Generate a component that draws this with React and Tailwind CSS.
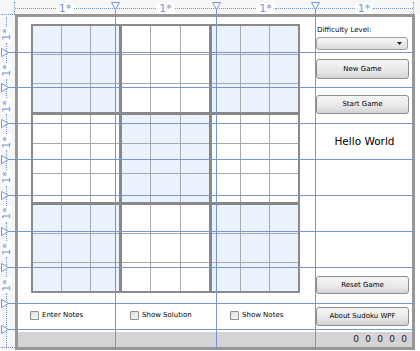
import React from 'react';

const blocks = [0, 1, 2, 3, 4, 5, 6, 7, 8];
const shadedBlocks = [0, 2, 4, 6, 8];

// Sudoku board: 3x3 blocks of 3x3 cells
const Board = () => (
  <div className="grid h-[269px] w-[269px] grid-cols-3 grid-rows-3 gap-[3px] border-2 border-[#8a8a8a] bg-[#888888]">
    {blocks.map((b) => (
      <div key={b} className="grid grid-cols-3 grid-rows-3 gap-px bg-[#a9a9a9]">
        {blocks.map((c) => (
          <div key={c} className={shadedBlocks.includes(b) ? 'bg-[#eaf3fd]' : 'bg-white'} />
        ))}
      </div>
    ))}
  </div>
);

const TopSegment = ({ className }) => (
  <div className={`flex items-center ${className}`}>
    <div className="flex-1 border-t border-dotted border-[#7396d4]" />
    <span className="bg-white px-[3px] text-[11px] leading-[11px] text-[#7396d4]">1*</span>
    <div className="flex-1 border-t border-dotted border-[#7396d4]" />
  </div>
);

const LeftSegment = () => (
  <div className="flex min-h-0 flex-1 flex-col items-center">
    <div className="flex-1 border-l border-dotted border-[#7396d4]" />
    <div className="flex h-[16px] w-[11px] items-center justify-center bg-white">
      <span className="-rotate-90 whitespace-nowrap text-[11px] leading-[11px] text-[#7396d4]">1*</span>
    </div>
    <div className="flex-1 border-l border-dotted border-[#7396d4]" />
  </div>
);

const GameButton = ({ children, className = '' }) => (
  <div
    className={`ml-px flex w-[93px] items-center justify-center rounded-[3px] border border-[#8e8e8e] bg-linear-to-b from-[#f5f5f5] via-[#ebebeb] to-[#d4d4d4] text-[7px] text-black ${className}`}
  >
    {children}
  </div>
);

const CheckBox = ({ label, className = '' }) => (
  <div className={`flex items-center gap-[3px] pt-[8px] ${className}`}>
    <div className="h-[9px] w-[9px] rounded-[1px] border border-[#8e8f8f] bg-linear-to-br from-[#dcdcdc] to-[#fbfbfb]" />
    <span className="text-[7px] leading-[9px] text-black">{label}</span>
  </div>
);

const DownTri = ({ className }) => (
  <svg className={`absolute h-[8px] w-[9px] ${className}`} viewBox="0 0 9 8">
    <polygon points="0.5,0.5 8.5,0.5 4.5,7.5" fill="white" stroke="#7396d4" strokeWidth="1" />
  </svg>
);

const RightTri = ({ className }) => (
  <svg className={`absolute left-px h-[9px] w-[8px] ${className}`} viewBox="0 0 8 9">
    <polygon points="0.5,0.5 7.5,4.5 0.5,8.5" fill="white" stroke="#7396d4" strokeWidth="1" />
  </svg>
);

export default function App() {
  return (
    <div className="relative h-[351px] w-[420px] overflow-hidden bg-white font-['DejaVu_Sans',sans-serif]">
      {/* Top ruler */}
      <div className="flex h-[14px] bg-[#f6f6f6] pt-[2px]">
        <div className="w-[15px] border-r border-dotted border-[#7396d4]" />
        <TopSegment className="w-[100px]" />
        <TopSegment className="w-[101px]" />
        <TopSegment className="w-[99px]" />
        <TopSegment className="w-[99px] border-r border-dotted border-[#7396d4]" />
      </div>

      <div className="flex">
        {/* Left ruler */}
        <div className="flex h-[336px] w-[15px] flex-col bg-[#f6f6f6] pl-px">
          <div className="h-[3px] border-t border-dotted border-[#7396d4]" />
          <div className="flex h-[286px] w-[11px] flex-col">
            <LeftSegment />
            <LeftSegment />
            <LeftSegment />
            <LeftSegment />
            <LeftSegment />
            <LeftSegment />
            <LeftSegment />
            <LeftSegment />
          </div>
          <div className="flex w-[11px] flex-1 flex-col items-center">
            <div className="flex-1 border-l border-dotted border-[#7396d4]" />
          </div>
          <div className="h-[3px] border-t border-dotted border-[#7396d4]" />
        </div>

        {/* Window */}
        <div className="h-[336px] w-[400px] border-[3px] border-[#979797] bg-white">
          <div className="grid h-full grid-cols-[97px_101px_99px_97px] grid-rows-[repeat(8,minmax(0,1fr))_26px_18px]">
            <div className="col-span-3 col-start-1 row-span-8 row-start-1 pl-[13px] pt-[7px]">
              <Board />
            </div>

            <div className="col-start-4 row-start-1 flex flex-col pt-[8px]">
              <span className="ml-[2px] text-[7px] leading-[10px] text-black">Difficulty Level:</span>
              <div className="ml-px mt-[2px] flex h-[13px] w-[92px] items-center justify-end rounded-[3px] border border-[#a0a0a0] bg-linear-to-b from-[#f8f8f8] to-[#dcdcdc] pr-[5px]">
                <svg className="h-[3px] w-[5px]" viewBox="0 0 5 3">
                  <polygon points="0,0 5,0 2.5,3" fill="#222" />
                </svg>
              </div>
            </div>

            <div className="col-start-4 row-start-2 pt-[6px]">
              <GameButton className="h-[20px]">New Game</GameButton>
            </div>

            <div className="col-start-4 row-start-3 pt-[6px]">
              <GameButton className="h-[19px]">Start Game</GameButton>
            </div>

            <div className="col-start-4 row-start-4 flex items-center justify-center pl-[2px]">
              <span className="text-[10.5px] text-black">Hello World</span>
            </div>

            <div className="col-start-4 row-start-8 flex items-center">
              <GameButton className="h-[18px]">Reset Game</GameButton>
            </div>

            <div className="col-start-1 row-start-9">
              <CheckBox label="Enter Notes" className="pl-[12px]" />
            </div>
            <div className="col-start-2 row-start-9">
              <CheckBox label="Show Solution" className="pl-[15px]" />
            </div>
            <div className="col-start-3 row-start-9">
              <CheckBox label="Show Notes" className="pl-[14px]" />
            </div>
            <div className="col-start-4 row-start-9 pt-[4px]">
              <GameButton className="h-[19px]">About Sudoku WPF</GameButton>
            </div>

            {/* Status bar */}
            <div className="col-span-4 col-start-1 row-start-10 pt-[3px]">
              <div className="flex h-full items-center justify-end bg-[#d4d4d4] pr-[2px] text-[9px] leading-[9px] text-[#222]">
                <span className="w-[12px] text-center">0</span>
                <span className="w-[12px] text-center">0</span>
                <span className="w-[12px] text-center">0</span>
                <span className="w-[12px] text-center">0</span>
                <span className="w-[12px] text-center">0</span>
              </div>
            </div>
          </div>
        </div>
      </div>

      {/* Designer grid adorners drawn over the layout */}
      <div className="absolute left-[115px] top-[3px] h-[347px] w-px bg-[#7396d4]" />
      <div className="absolute left-[216px] top-[3px] h-[347px] w-px bg-[#7396d4]" />
      <div className="absolute left-[315px] top-[3px] h-[347px] w-px bg-[#7396d4]" />

      <div className="absolute left-[2px] top-[52px] h-px w-[413px] bg-[#7396d4]" />
      <div className="absolute left-[2px] top-[87px] h-px w-[413px] bg-[#7396d4]" />
      <div className="absolute left-[2px] top-[123px] h-px w-[413px] bg-[#7396d4]" />
      <div className="absolute left-[2px] top-[159px] h-px w-[413px] bg-[#7396d4]" />
      <div className="absolute left-[2px] top-[195px] h-px w-[413px] bg-[#7396d4]" />
      <div className="absolute left-[2px] top-[231px] h-px w-[413px] bg-[#7396d4]" />
      <div className="absolute left-[2px] top-[267px] h-px w-[413px] bg-[#7396d4]" />
      <div className="absolute left-[2px] top-[303px] h-px w-[413px] bg-[#7396d4]" />
      <div className="absolute left-[2px] top-[329px] h-px w-[413px] bg-[#7396d4]" />

      <DownTri className="left-[111px] top-[2px]" />
      <DownTri className="left-[212px] top-[2px]" />
      <DownTri className="left-[311px] top-[2px]" />

      <RightTri className="top-[48px]" />
      <RightTri className="top-[83px]" />
      <RightTri className="top-[119px]" />
      <RightTri className="top-[155px]" />
      <RightTri className="top-[191px]" />
      <RightTri className="top-[227px]" />
      <RightTri className="top-[263px]" />
      <RightTri className="top-[299px]" />
      <RightTri className="top-[325px]" />
    </div>
  );
}
